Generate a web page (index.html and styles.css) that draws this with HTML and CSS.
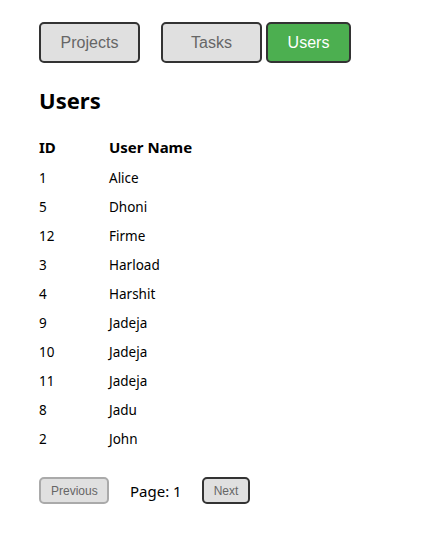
FILE: index.html
```html
<!DOCTYPE html>
<html lang="en">
<head>
    <meta charset="UTF-8">
    <meta name="viewport" content="width=device-width, initial-scale=1.0">
    <title>Users</title>
    <link rel="stylesheet" href="styles.css">
</head>
<body>
    <div class="nav">
        <button class="tab">Projects</button>
        <button class="tab">Tasks</button>
        <button class="tab active">Users</button>
    </div>

    <h2>Users</h2>
    <table class="users">
        <thead>
            <tr><th class="col-id">ID</th><th>User Name</th></tr>
        </thead>
        <tbody>
            <tr><td>1</td><td>Alice</td></tr>
            <tr><td>5</td><td>Dhoni</td></tr>
            <tr><td>12</td><td>Firme</td></tr>
            <tr><td>3</td><td>Harload</td></tr>
            <tr><td>4</td><td>Harshit</td></tr>
            <tr><td>9</td><td>Jadeja</td></tr>
            <tr><td>10</td><td>Jadeja</td></tr>
            <tr><td>11</td><td>Jadeja</td></tr>
            <tr><td>8</td><td>Jadu</td></tr>
            <tr><td>2</td><td>John</td></tr>
        </tbody>
    </table>

    <div class="pagination">
        <button class="page-btn" disabled>Previous</button>
        <span class="page-label">Page: 1</span>
        <button class="page-btn">Next</button>
    </div>
</body>
</html>
```

FILE: styles.css
```css
body {
    font-family: "Noto Sans", "Open Sans", sans-serif;
    color: #000;
    background-color: #fff;
    margin: 0;
    padding: 22px 39px;
}
.nav {
    display: flex;
    align-items: center;
}
.tab {
    font-family: "Liberation Sans", Arial, sans-serif;
    font-size: 16px;
    height: 41px;
    width: 101px;
    margin-right: 21px;
    padding: 0;
    background-color: #e0e0e0;
    color: #666;
    border: 2px solid #333;
    border-radius: 5px;
    cursor: pointer;
}
.tab:nth-child(2) {
    margin-right: 4px;
}
.tab.active {
    width: 85px;
    background-color: #4caf50;
    color: #fff;
}
h2 {
    font-size: 22px;
    font-weight: bold;
    margin: 22px 0 22px;
}
.users {
    border-collapse: collapse;
    font-size: 13.5px;
}
.users th {
    text-align: left;
    font-weight: bold;
    font-size: 15px;
    padding: 0 0 6px;
}
.users td {
    padding: 5px 0;
    height: 19px;
}
.col-id {
    width: 70px;
}
.pagination {
    display: flex;
    align-items: center;
    margin-top: 24px;
}
.page-btn {
    font-family: "Liberation Sans", Arial, sans-serif;
    font-size: 12px;
    height: 27px;
    padding: 0 10px;
    background-color: #e0e0e0;
    color: #666;
    border: 2px solid #333;
    border-radius: 5px;
    cursor: pointer;
}
.page-btn:disabled {
    width: 70px;
    border-color: #aaa;
    color: #666;
    cursor: default;
}
.page-label {
    font-size: 15px;
    margin: 0 20px 0 21px;
}
```
